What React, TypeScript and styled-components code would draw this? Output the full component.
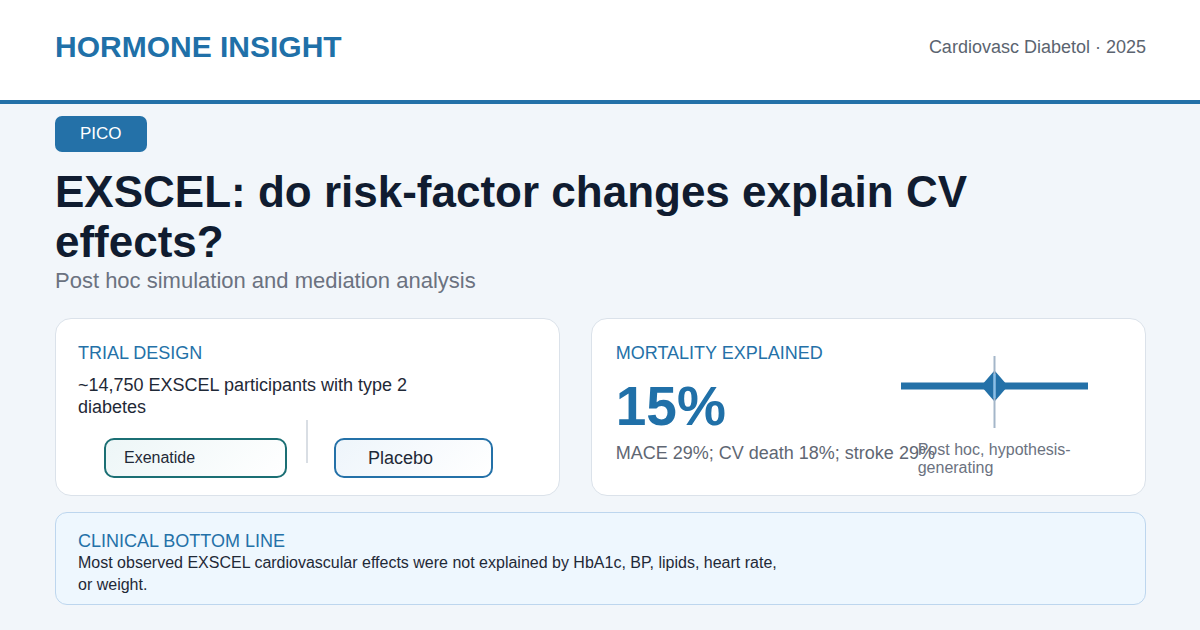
import React from 'react';
import styled, { createGlobalStyle } from 'styled-components';

const GlobalStyle = createGlobalStyle`
  html, body {
    margin: 0;
    padding: 0;
    background: #f2f6fa;
    font-family: "Liberation Sans", Arial, sans-serif;
  }
  * {
    box-sizing: border-box;
  }
`;

const Page = styled.div`
  width: 1200px;
  height: 630px;
  overflow: hidden;
  background: #f2f6fa;
`;

const Header = styled.header`
  height: 104px;
  background: #ffffff;
  border-bottom: 4px solid #2471a8;
  display: flex;
  align-items: center;
  justify-content: space-between;
  padding: 0 54px 6px 55px;
`;

const Brand = styled.div`
  font-size: 30px;
  font-weight: 700;
  color: #2070a8;
`;

const Source = styled.div`
  font-size: 18px;
  color: #5b6470;
`;

const Main = styled.main`
  padding: 12px 54px 0 55px;
`;

const Badge = styled.span`
  display: inline-block;
  background: #2471a8;
  color: #ffffff;
  font-size: 17px;
  padding: 8px 25px;
  border-radius: 7px;
`;

const Title = styled.h1`
  margin: 15px 0 0;
  max-width: 1000px;
  font-size: 44px;
  line-height: 50px;
  font-weight: 700;
  color: #101c30;
`;

const Subtitle = styled.p`
  margin: 1px 0 0;
  font-size: 22px;
  color: #6b7280;
`;

const CardRow = styled.div`
  display: grid;
  grid-template-columns: 1fr 1.1fr;
  gap: 31px;
  margin-top: 24px;
`;

const Card = styled.section<{ $padX: number }>`
  background: #ffffff;
  border: 1.5px solid #dbe2ea;
  border-radius: 16px;
  padding: 24px ${(p) => p.$padX}px 16px;
  height: 178px;
`;

const CardLabel = styled.div`
  font-size: 18px;
  color: #2471a8;
`;

const CardText = styled.p`
  margin: 11px 0 0;
  max-width: 360px;
  font-size: 18px;
  line-height: 1.2;
  color: #1f2937;
`;

const Arms = styled.div`
  display: flex;
  align-items: flex-start;
  margin-top: 2px;
  padding-left: 26px;
`;

const Arm = styled.div<{ $color: string; $tint: string; $w: number; $pad: number; $size: number }>`
  width: ${(p) => p.$w}px;
  height: 40px;
  margin-top: 18px;
  display: flex;
  align-items: center;
  padding-left: ${(p) => p.$pad}px;
  border: 2px solid ${(p) => p.$color};
  border-radius: 10px;
  background: linear-gradient(135deg, ${(p) => p.$tint} 0%, #ffffff 100%);
  font-size: ${(p) => p.$size}px;
  color: #1f2937;
`;

const ArmDivider = styled.div`
  width: 2px;
  height: 43px;
  margin: 0 26px 0 19px;
  background: #d9dee4;
`;

const StatBody = styled.div`
  display: grid;
  grid-template-columns: 1fr 1fr;
`;

const StatColumn = styled.div`
  min-width: 0;
`;

const BigNumber = styled.div`
  margin-top: 15px;
  font-size: 55px;
  line-height: 1;
  font-weight: 700;
  color: #2070a8;
`;

const StatNote = styled.div`
  margin-top: 9px;
  font-size: 18px;
  color: #5f6773;
  white-space: nowrap;
`;

const ChartColumn = styled.div`
  display: flex;
  flex-direction: column;
  align-items: center;
`;

const Caption = styled.div`
  width: 154px;
  margin-top: 2px;
  font-size: 16px;
  line-height: 1.1;
  color: #6b7280;
`;

const BottomCard = styled.section`
  margin-top: 16px;
  background: #eef7fe;
  border: 1.5px solid #bdd6ee;
  border-radius: 12px;
  padding: 18px 22px 9px;
`;

const BottomText = styled.p`
  margin: 0;
  max-width: 710px;
  font-size: 16px;
  line-height: 1.35;
  color: #1f2937;
`;

function ForestPlot() {
  return (
    <svg width="187" height="96" viewBox="0 0 187 96">
      <rect x="0" y="39.5" width="187" height="7" fill="#2471a8" />
      <polygon points="93.5,27.5 107,43 93.5,58.5 80,43" fill="#2471a8" />
      <line x1="93.5" y1="13" x2="93.5" y2="85" stroke="#a4b6c9" strokeWidth="2" />
      <line x1="93.5" y1="31" x2="93.5" y2="55" stroke="#86c0ec" strokeWidth="2" />
    </svg>
  );
}

function App() {
  return (
    <Page>
      <GlobalStyle />
      <Header>
        <Brand>HORMONE INSIGHT</Brand>
        <Source>Cardiovasc Diabetol · 2025</Source>
      </Header>
      <Main>
        <Badge>PICO</Badge>
        <Title>EXSCEL: do risk-factor changes explain CV effects?</Title>
        <Subtitle>Post hoc simulation and mediation analysis</Subtitle>

        <CardRow>
          <Card $padX={22}>
            <CardLabel>TRIAL DESIGN</CardLabel>
            <CardText>~14,750 EXSCEL participants with type 2 diabetes</CardText>
            <Arms>
              <Arm $color="#1b6f74" $tint="#edf6f7" $w={183} $pad={18} $size={16}>
                Exenatide
              </Arm>
              <ArmDivider />
              <Arm $color="#2471a8" $tint="#eef5fb" $w={159} $pad={32} $size={18}>
                Placebo
              </Arm>
            </Arms>
          </Card>

          <Card $padX={24}>
            <StatBody>
              <StatColumn>
                <CardLabel>MORTALITY EXPLAINED</CardLabel>
                <BigNumber>15%</BigNumber>
                <StatNote>MACE 29%; CV death 18%; stroke 29%</StatNote>
              </StatColumn>
              <ChartColumn>
                <ForestPlot />
                <Caption>Post hoc, hypothesis-generating</Caption>
              </ChartColumn>
            </StatBody>
          </Card>
        </CardRow>

        <BottomCard>
          <CardLabel>CLINICAL BOTTOM LINE</CardLabel>
          <BottomText>
            Most observed EXSCEL cardiovascular effects were not explained by HbA1c, BP, lipids, heart rate,
            or weight.
          </BottomText>
        </BottomCard>
      </Main>
    </Page>
  );
}

export default App;
